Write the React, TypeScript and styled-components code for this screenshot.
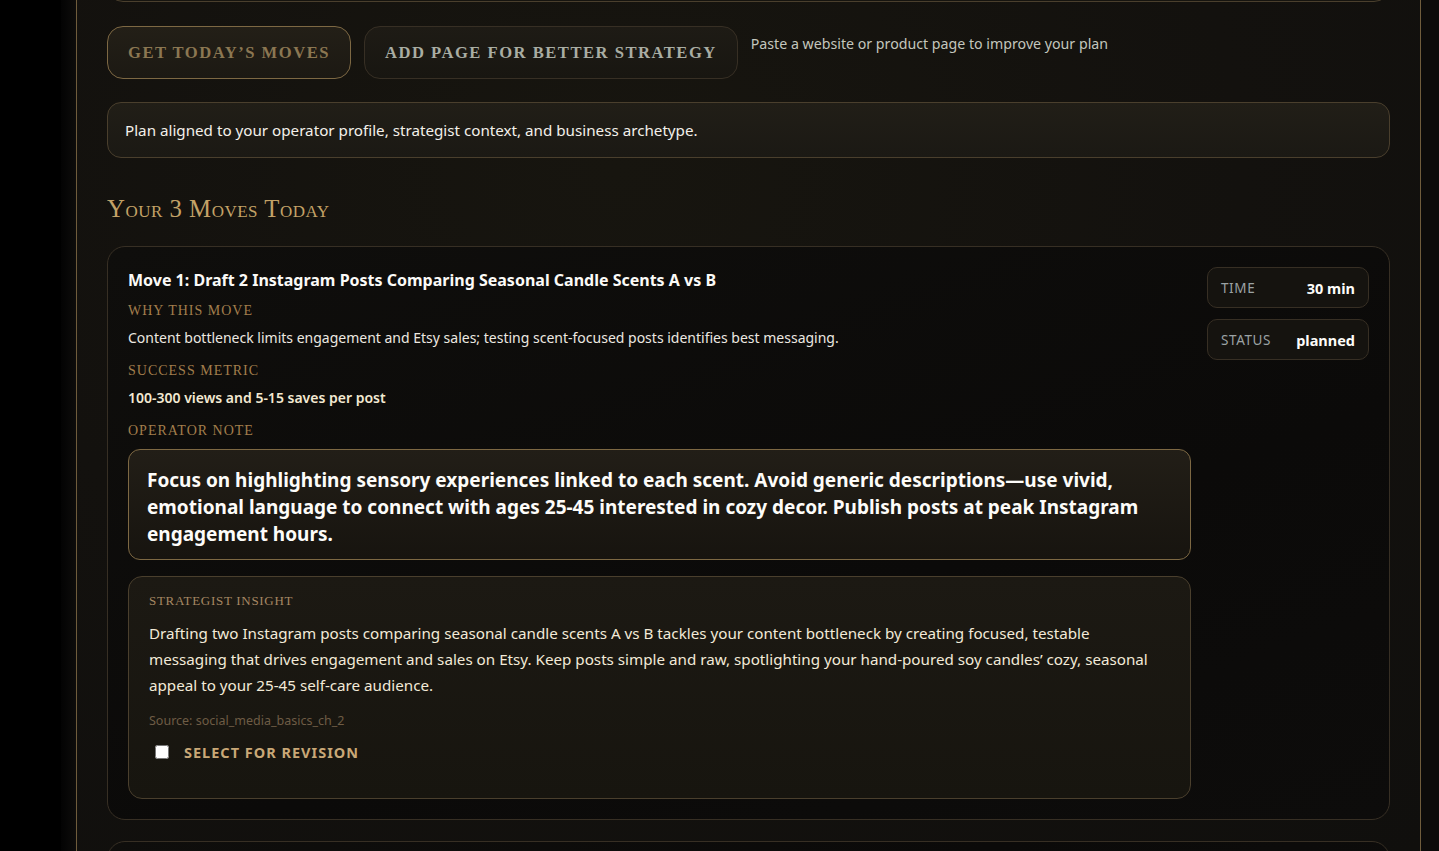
import styled, { createGlobalStyle } from "styled-components";

const SANS = `"Noto Sans", "Open Sans", sans-serif`;
const SERIF = `"Liberation Serif", "DejaVu Serif", serif`;

const GOLD_LINE = "#6f5c3c";
const GOLD_SOFT = "#4a3f2d";
const GOLD_DIM = "#372f24";

const GlobalStyle = createGlobalStyle`
  html, body {
    margin: 0;
    padding: 0;
    background: #000;
    overflow: hidden;
  }
  * {
    box-sizing: border-box;
  }
`;

const Page = styled.div`
  display: flex;
  height: 851px;
  overflow: hidden;
  background: #0c0b0a;
  font-family: ${SANS};
`;

const Rail = styled.div`
  width: 61px;
  flex-shrink: 0;
  background: #000;
`;

const Gutter = styled.div`
  width: 15px;
  flex-shrink: 0;
  background: linear-gradient(to right, #030303, #0d0c0b);
`;

const Panel = styled.main`
  width: 1345px;
  flex-shrink: 0;
  border-left: 1px solid ${GOLD_LINE};
  border-right: 1px solid ${GOLD_LINE};
  background: radial-gradient(ellipse at 40% 20%, #17150f 0%, #13110e 55%, #100f0d 100%);
  padding: 0 30px;
`;

const PrevCardEdge = styled.div`
  height: 40px;
  margin-top: -38px;
  border: 1px solid ${GOLD_SOFT};
  border-radius: 16px;
  background: #16140f;
`;

const ActionRow = styled.div`
  display: flex;
  align-items: flex-start;
  gap: 13px;
  margin-top: 24px;
`;

const ActionButton = styled.button<{ $primary?: boolean }>`
  height: 53px;
  padding: 0 20px;
  border-radius: 16px;
  border: 1px solid ${(p) => (p.$primary ? "#7d6843" : GOLD_DIM)};
  background: ${(p) =>
    p.$primary
      ? "linear-gradient(180deg, #231f17, #1c1913)"
      : "linear-gradient(180deg, #1e1b15, #181611)"};
  color: ${(p) => (p.$primary ? "#8b7752" : "#a9ada3")};
  font-family: ${SERIF};
  font-weight: 700;
  font-size: 16.6px;
  letter-spacing: 1.5px;
  text-transform: uppercase;
  cursor: pointer;
`;

const Hint = styled.p`
  margin: 0;
  padding-top: 8px;
  font-size: 14.2px;
  line-height: 20px;
  color: #c3c6bd;
`;

const Notice = styled.div`
  margin-top: 23px;
  padding: 17px 17px;
  border: 1px solid ${GOLD_SOFT};
  border-radius: 14px;
  background: linear-gradient(180deg, #211e17, #1b1914);
  color: #f3f0ea;
  font-size: 15.2px;
  line-height: 20px;
`;

const SectionTitle = styled.h2`
  margin: 36px 0 22px;
  font-family: ${SERIF};
  font-weight: 400;
  font-size: 24.8px;
  line-height: 30px;
  font-variant: small-caps;
  letter-spacing: 0.5px;
  color: #c3a267;
`;

const MoveCard = styled.section<{ $peek?: boolean }>`
  display: grid;
  grid-template-columns: 1fr 162px;
  gap: 16px;
  padding: 20px;
  border: 1px solid ${GOLD_DIM};
  border-radius: 18px;
  background: linear-gradient(160deg, #0f0e0c, #0b0a09 60%, #0d0c0b);
  & + & {
    margin-top: 21px;
  }
  ${(p) => (p.$peek ? "height: 80px;" : "")}
`;

const MoveMain = styled.div`
  display: flex;
  flex-direction: column;
  min-width: 0;
`;

const MoveTitle = styled.h3`
  margin: 0;
  font-size: 16px;
  line-height: 26px;
  font-weight: 700;
  color: #fbfaf7;
`;

const FieldLabel = styled.div<{ $gap?: number }>`
  margin-top: ${(p) => p.$gap ?? 13}px;
  font-family: ${SERIF};
  font-size: 14px;
  line-height: 18px;
  letter-spacing: 1px;
  text-transform: uppercase;
  color: #a27e4c;
`;

const FieldText = styled.p<{ $strong?: boolean }>`
  margin: 7px 0 0;
  font-size: 14px;
  line-height: 22px;
  font-weight: ${(p) => (p.$strong ? 600 : 400)};
  color: ${(p) => (p.$strong ? "#f3e9d2" : "#ece8e0")};
`;

const OperatorNote = styled.div`
  margin-top: 9px;
  padding: 17px 18px 11px;
  border: 1px solid #7d6843;
  border-radius: 12px;
  background: linear-gradient(180deg, #221e17, #17140f);
  color: #fdfcf9;
  font-size: 19px;
  line-height: 27px;
  font-weight: 700;
`;

const Insight = styled.div`
  margin-top: 16px;
  padding: 15px 20px 35px;
  border: 1px solid ${GOLD_SOFT};
  border-radius: 14px;
  background: linear-gradient(180deg, #1c1913, #17150f);
`;

const InsightLabel = styled.div`
  font-family: ${SERIF};
  font-size: 13px;
  line-height: 18px;
  letter-spacing: 0.7px;
  text-transform: uppercase;
  color: #a68863;
`;

const InsightText = styled.p`
  margin: 10px 0 0;
  font-size: 15.2px;
  line-height: 26px;
  color: #f2ead8;
`;

const Source = styled.div`
  margin-top: 14px;
  font-size: 12.5px;
  line-height: 18px;
  color: #6e5c45;
`;

const RevisionToggle = styled.label`
  display: flex;
  align-items: center;
  gap: 15px;
  margin-top: 11px;
  padding-left: 6px;
  font-size: 14.5px;
  line-height: 22px;
  font-weight: 700;
  letter-spacing: 1px;
  text-transform: uppercase;
  color: #c9a877;
  cursor: pointer;

  input {
    margin: 0;
    width: 14px;
    height: 14px;
  }
`;

const MoveSide = styled.aside`
  display: flex;
  flex-direction: column;
  gap: 11px;
`;

const Stat = styled.div`
  display: flex;
  align-items: center;
  justify-content: space-between;
  height: 41px;
  padding: 0 13px 0 13px;
  border: 1px solid ${GOLD_DIM};
  border-radius: 10px;
  background: #15130f;
`;

const StatLabel = styled.span`
  font-size: 13.5px;
  letter-spacing: 0.6px;
  text-transform: uppercase;
  color: #9ba2a4;
`;

const StatValue = styled.span`
  font-size: 14.5px;
  font-weight: 700;
  color: #fdfcf9;
`;

export default function App() {
  return (
    <>
      <GlobalStyle />
      <Page>
        <Rail />
        <Gutter />
        <Panel>
          <PrevCardEdge />
          <ActionRow>
            <ActionButton $primary>Get Today’s Moves</ActionButton>
            <ActionButton>Add Page for Better Strategy</ActionButton>
            <Hint>Paste a website or product page to improve your plan</Hint>
          </ActionRow>
          <Notice>
            Plan aligned to your operator profile, strategist context, and business archetype.
          </Notice>
          <SectionTitle>Your 3 Moves Today</SectionTitle>
          <MoveCard>
            <MoveMain>
              <MoveTitle>
                Move 1: Draft 2 Instagram Posts Comparing Seasonal Candle Scents A vs B
              </MoveTitle>
              <FieldLabel $gap={9}>Why this move</FieldLabel>
              <FieldText>
                Content bottleneck limits engagement and Etsy sales; testing scent-focused posts
                identifies best messaging.
              </FieldText>
              <FieldLabel>Success metric</FieldLabel>
              <FieldText $strong>100-300 views and 5-15 saves per post</FieldText>
              <FieldLabel>Operator note</FieldLabel>
              <OperatorNote>
                Focus on highlighting sensory experiences linked to each scent. Avoid generic
                descriptions—use vivid,
                <br />
                emotional language to connect with ages 25-45 interested in cozy decor. Publish
                posts at peak Instagram
                <br />
                engagement hours.
              </OperatorNote>
              <Insight>
                <InsightLabel>Strategist insight</InsightLabel>
                <InsightText>
                  Drafting two Instagram posts comparing seasonal candle scents A vs B tackles
                  your content bottleneck by creating focused, testable
                  <br />
                  messaging that drives engagement and sales on Etsy. Keep posts simple and raw,
                  spotlighting your hand-poured soy candles’ cozy, seasonal
                  <br />
                  appeal to your 25-45 self-care audience.
                </InsightText>
                <Source>Source: social_media_basics_ch_2</Source>
                <RevisionToggle>
                  <input type="checkbox" />
                  Select for revision
                </RevisionToggle>
              </Insight>
            </MoveMain>
            <MoveSide>
              <Stat>
                <StatLabel>Time</StatLabel>
                <StatValue>30 min</StatValue>
              </Stat>
              <Stat>
                <StatLabel>Status</StatLabel>
                <StatValue>planned</StatValue>
              </Stat>
            </MoveSide>
          </MoveCard>
          <MoveCard $peek />
        </Panel>
      </Page>
    </>
  );
}
